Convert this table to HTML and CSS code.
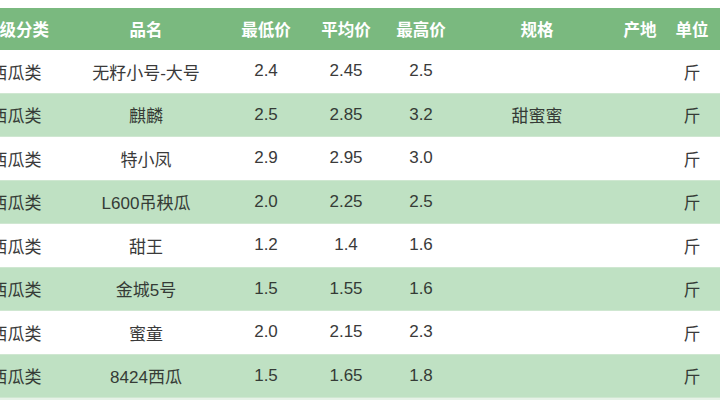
FILE: index.html
```html
<!DOCTYPE html>
<html lang="zh-CN">
<head>
<meta charset="utf-8">
<link rel="stylesheet" href="styles.css">
<title>价格表</title>
</head>
<body>
<div class="page">
  <div class="table">
    <div class="row head">
      <div>一级分类</div><div>品名</div><div>最低价</div><div>平均价</div><div>最高价</div><div>规格</div><div>产地</div><div>单位</div>
    </div>
    <div class="row">
      <div>西瓜类</div><div>无籽小号-大号</div><div>2.4</div><div>2.45</div><div>2.5</div><div></div><div></div><div>斤</div>
    </div>
    <div class="row alt">
      <div>西瓜类</div><div>麒麟</div><div>2.5</div><div>2.85</div><div>3.2</div><div>甜蜜蜜</div><div></div><div>斤</div>
    </div>
    <div class="row">
      <div>西瓜类</div><div>特小凤</div><div>2.9</div><div>2.95</div><div>3.0</div><div></div><div></div><div>斤</div>
    </div>
    <div class="row alt">
      <div>西瓜类</div><div>L600吊秧瓜</div><div>2.0</div><div>2.25</div><div>2.5</div><div></div><div></div><div>斤</div>
    </div>
    <div class="row">
      <div>西瓜类</div><div>甜王</div><div>1.2</div><div>1.4</div><div>1.6</div><div></div><div></div><div>斤</div>
    </div>
    <div class="row alt">
      <div>西瓜类</div><div>金城5号</div><div>1.5</div><div>1.55</div><div>1.6</div><div></div><div></div><div>斤</div>
    </div>
    <div class="row">
      <div>西瓜类</div><div>蜜童</div><div>2.0</div><div>2.15</div><div>2.3</div><div></div><div></div><div>斤</div>
    </div>
    <div class="row alt">
      <div>西瓜类</div><div>8424西瓜</div><div>1.5</div><div>1.65</div><div>1.8</div><div></div><div></div><div>斤</div>
    </div>
  </div>
</div>
</body>
</html>
```
FILE: styles.css
```css
html, body {
  margin: 0;
  padding: 0;
  background: #ffffff;
}
.page {
  width: 720px;
  height: 405px;
  overflow: hidden;
  padding-top: 8px;
  box-sizing: border-box;
  font-family: "Liberation Sans", "Noto Sans CJK SC", sans-serif;
  font-size: 17px;
  color: #3a3a3a;
}
.table {
  width: 760px;
  margin-left: -40px;
  border-bottom: 2px solid #e6f2e7;
}
.row {
  display: grid;
  grid-template-columns: 112px 148px 92px 68px 82px 150px 56px 52px;
  height: 43.5px;
  align-items: center;
  background: #ffffff;
  box-sizing: border-box;
  border-bottom: 1px solid #cfe7d1;
}
.row > div {
  text-align: center;
  white-space: nowrap;
}
.row > div:last-child {
  padding-right: 4px;
}
.row.alt {
  background: #bfe1c3;
  color: #353b36;
}
.row.head {
  height: 42px;
  background: #7ab97f;
  color: #ffffff;
  font-weight: bold;
  font-size: 16.5px;
  border-bottom: none;
}
```
